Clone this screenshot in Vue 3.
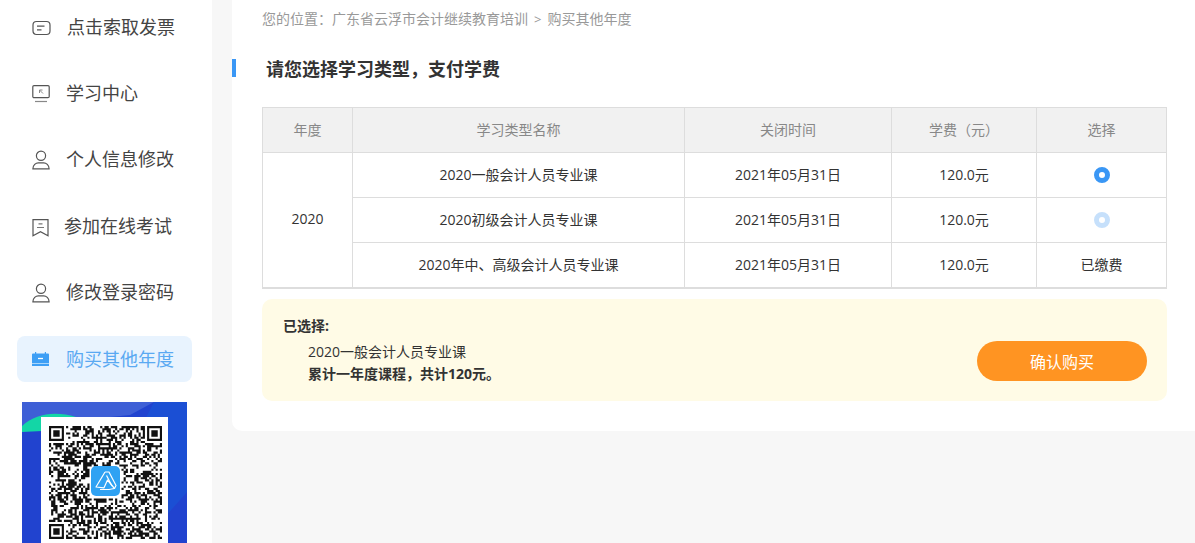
<script setup>
const menu = [
  { label: '点击索取发票', icon: 'invoice', w: 19 },
  { label: '学习中心', icon: 'screen', w: 18 },
  { label: '个人信息修改', icon: 'user', w: 18 },
  { label: '参加在线考试', icon: 'book', w: 16 },
  { label: '修改登录密码', icon: 'user', w: 18 },
  { label: '购买其他年度', icon: 'buy', w: 18, active: true }
]
const rows = [
  { name: '2020一般会计人员专业课', state: 'on' },
  { name: '2020初级会计人员专业课', state: 'off' },
  { name: '2020年中、高级会计人员专业课', state: 'paid' }
]

const N = 53
let seed = 20200531
const rnd = () => {
  seed = (seed * 1664525 + 1013904223) >>> 0
  return (seed >>> 8) / 16777216
}
const inFinder = (x, y) =>
  (x < 8 && y < 8) || (x >= N - 8 && y < 8) || (x < 8 && y >= N - 8)
const inLogo = (x, y) => x >= 19 && x <= 33 && y >= 19 && y <= 33
let qr = ''
for (let y = 0; y < N; y++) {
  for (let x = 0; x < N; x++) {
    const v = rnd()
    if (inFinder(x, y) || inLogo(x, y)) continue
    if (v < 0.54) qr += `M${x} ${y}h1v1h-1z`
  }
}
const finder = (x, y) =>
  `M${x} ${y}h7v7h-7zM${x + 1} ${y + 1}v5h5v-5zM${x + 2} ${y + 2}h3v3h-3z`
const qrPath = qr + finder(0, 0) + finder(N - 7, 0) + finder(0, N - 7)
</script>

<template>
  <div class="page">
    <aside class="side">
      <ul class="menu">
        <li v-for="m in menu" :key="m.label" class="item" :class="{ active: m.active }">
          <svg class="ico" :width="m.w" height="20" :viewBox="`0 0 ${m.w} 20`" fill="none" stroke="#555" stroke-width="1.2">
            <template v-if="m.icon === 'invoice'">
              <rect x="1" y="3.500" width="17" height="13" rx="3.500" />
              <path d="M5 8.200h7.500M5 11.800h4.500" />
            </template>
            <template v-else-if="m.icon === 'screen'">
              <rect x="0.800" y="1.600" width="16.400" height="12" rx="1.200" />
              <path d="M3 17.500h12" stroke="#888" />
              <path d="M7.500 6h3M7.500 6v3M7.700 6.200l3.300 3.300" stroke="#888" stroke-width="1" />
            </template>
            <template v-else-if="m.icon === 'user'">
              <circle cx="9" cy="5.800" r="4.600" />
              <path d="M.9 18.800c0-3.800 3-6 5.400-6h5.400c2.400 0 5.400 2.200 5.400 6z" />
            </template>
            <template v-else-if="m.icon === 'book'">
              <path d="M1 2.600h15v16.200l-7.500-4-7.500 4z" />
              <path d="M6.500 6.800h4M5 10.500h7" stroke="#777" />
            </template>
            <template v-else>
              <path d="M3 3h1.200v1.500h8.600V3H14v1.500h2a1 1 0 0 1 1 1V17H0V5.500a1 1 0 0 1 1-1h2z" fill="#3e9ff5" stroke="none" />
              <path d="M0 14.500h17" stroke="#a9d6fb" stroke-width="1" />
              <path d="M6 9.500h5" stroke="#fff" stroke-width="1.300" />
            </template>
          </svg>
          <span class="label">{{ m.label }}</span>
        </li>
      </ul>
      <div class="promo">
        <svg class="promo-bg" width="165" height="141" viewBox="0 0 165 141">
          <rect width="165" height="141" fill="#2143cf" />
          <path d="M0 0h132L108 13 0 24z" fill="#3e5fd6" />
          <path d="M132 0h33v90L120 141H60z" fill="#1a52d4" opacity=".8" />
          <path d="M0 24C14 11 34 9 54 15L40 28 0 30z" fill="#13d6a6" />
        </svg>
        <div class="qr">
          <svg class="qr-code" width="113" height="113" :viewBox="`0 0 ${N} ${N}`">
            <path :d="qrPath" fill="#111" fill-rule="evenodd" />
          </svg>
          <div class="qr-logo">
            <svg width="24" height="22" viewBox="0 0 24 22" fill="none" stroke="#fff" stroke-width="1.200" stroke-linejoin="round">
              <path d="M11 2 2 17l8 .8L13.500 10l7 8.500L15 19.500H6" />
              <path d="M11 2h4l7 13.500-1.500 3" />
              <path d="M12.500 5.500 18 16" />
            </svg>
          </div>
        </div>
      </div>
    </aside>

    <main class="main">
      <section class="card">
        <div class="crumb">您的位置&#xFF1A;广东省云浮市会计继续教育培训<span class="sep">&gt;</span>购买其他年度</div>
        <h2 class="title">请您选择学习类型&#xFF0C;支付学费</h2>
        <table class="tbl">
          <colgroup>
            <col class="c1" />
            <col class="c2" />
            <col class="c3" />
            <col class="c4" />
            <col class="c5" />
          </colgroup>
          <thead>
            <tr>
              <th>年度</th>
              <th>学习类型名称</th>
              <th>关闭时间</th>
              <th>学费&#xFF08;元&#xFF09;</th>
              <th>选择</th>
            </tr>
          </thead>
          <tbody>
            <tr v-for="(r, i) in rows" :key="r.name">
              <td v-if="i === 0" rowspan="3">2020</td>
              <td>{{ r.name }}</td>
              <td>2021年05月31日</td>
              <td>120.0元</td>
              <td>
                <span v-if="r.state === 'paid'">已缴费</span>
                <span v-else class="radio" :class="r.state"></span>
              </td>
            </tr>
          </tbody>
        </table>
        <div class="notice">
          <div class="info">
            <div class="picked">已选择:</div>
            <div class="line">2020一般会计人员专业课</div>
            <div class="line strong">累计一年度课程&#xFF0C;共计120元。</div>
          </div>
          <button class="buy" type="button">确认购买</button>
        </div>
      </section>
    </main>
  </div>
</template>

<style>
html, body { margin: 0; height: 543px; overflow: hidden; background: #f7f7f7; }
</style>

<style scoped>
.page {
  display: flex;
  height: 543px;
  overflow: hidden;
  background: #f7f7f7;
  color: #333;
  font-family: "Open Sans", "Noto Sans CJK SC", sans-serif;
}
.side {
  width: 212px;
  flex: none;
  background: #fff;
  padding: 5px 20px 0 17px;
  box-sizing: border-box;
  overflow: hidden;
}
.menu { list-style: none; margin: 0; padding: 0; display: flex; flex-direction: column; gap: 20.2px; }
.item {
  height: 46px;
  display: flex;
  align-items: center;
  gap: 16px;
  padding-left: 15px;
  border-radius: 8px;
  font-size: 18px;
  color: #444;
}
.label { line-height: 24px; padding-bottom: 2px; }
.item.active { background: #e8f3fe; color: #5aa9f2; }
.item.active .label { padding-bottom: 0; }
.ico { flex: none; display: block; overflow: visible; }
.promo {
  position: relative;
  width: 165px;
  height: 141px;
  margin: 20px 0 0 5px;
  overflow: hidden;
}
.promo-bg { display: block; }
.qr {
  position: absolute;
  left: 19px;
  top: 15px;
  width: 127px;
  height: 127px;
  background: #fff;
  padding: 9px 8px 5px 8px;
  box-sizing: border-box;
}
.qr-code { display: block; }
.qr-logo {
  position: absolute;
  left: 50px;
  top: 49px;
  width: 29px;
  height: 30px;
  border-radius: 5px;
  background: #2fa2f3;
  display: flex;
  align-items: center;
  justify-content: center;
}
.main { flex: 1; min-width: 0; padding-left: 20px; }
.card {
  height: 431px;
  box-sizing: border-box;
  background: #fff;
  border-bottom-left-radius: 10px;
  padding: 0 28px 0 30px;
}
.crumb {
  height: 38px;
  line-height: 38px;
  font-size: 14px;
  color: #999;
}
.sep { margin: 0 6px; font-size: 13px; }
.title {
  margin: 21px 0 0 -30px;
  height: 18px;
  line-height: 20px;
  font-size: 18px;
  font-weight: 700;
  color: #333;
  border-left: 4px solid #3a97f5;
  padding-left: 30px;
}
.tbl {
  margin-top: 30px;
  width: 904px;
  table-layout: fixed;
  border-collapse: collapse;
  font-size: 14px;
  text-align: center;
  border-bottom: 2px solid #ddd;
}
.c1 { width: 90px; }
.c2 { width: 332px; }
.c3 { width: 207px; }
.c4 { width: 145px; }
.c5 { width: 130px; }
.tbl th, .tbl td { border: 1px solid #ddd; height: 45px; padding: 0 0 2px; box-sizing: border-box; }
.tbl th { background: #f1f1f1; color: #888; font-weight: 400; }
.tbl td { color: #333; }
.radio {
  display: block;
  width: 16px;
  height: 16px;
  margin: 2px auto 0;
  box-sizing: border-box;
  border-radius: 50%;
  border: 5px solid #3a97f5;
  background: #fff;
}
.radio.off { border-color: #c6e0fb; }
.notice {
  margin-top: 10px;
  height: 102px;
  box-sizing: border-box;
  background: #fffbe6;
  border-radius: 10px;
  padding: 0 20px 20px 21px;
  display: flex;
  align-items: flex-end;
  justify-content: space-between;
}
.info { font-size: 14px; color: #333; margin-bottom: -4px; }
.picked { font-weight: 700; line-height: 20px; margin-bottom: 5px; }
.line { padding-left: 25px; line-height: 22px; }
.strong { font-weight: 700; }
.buy {
  width: 170px;
  height: 40px;
  border: 0;
  border-radius: 20px;
  background: #ff9422;
  color: #fff;
  font: inherit;
  font-size: 16px;
  padding: 0;
}
</style>
